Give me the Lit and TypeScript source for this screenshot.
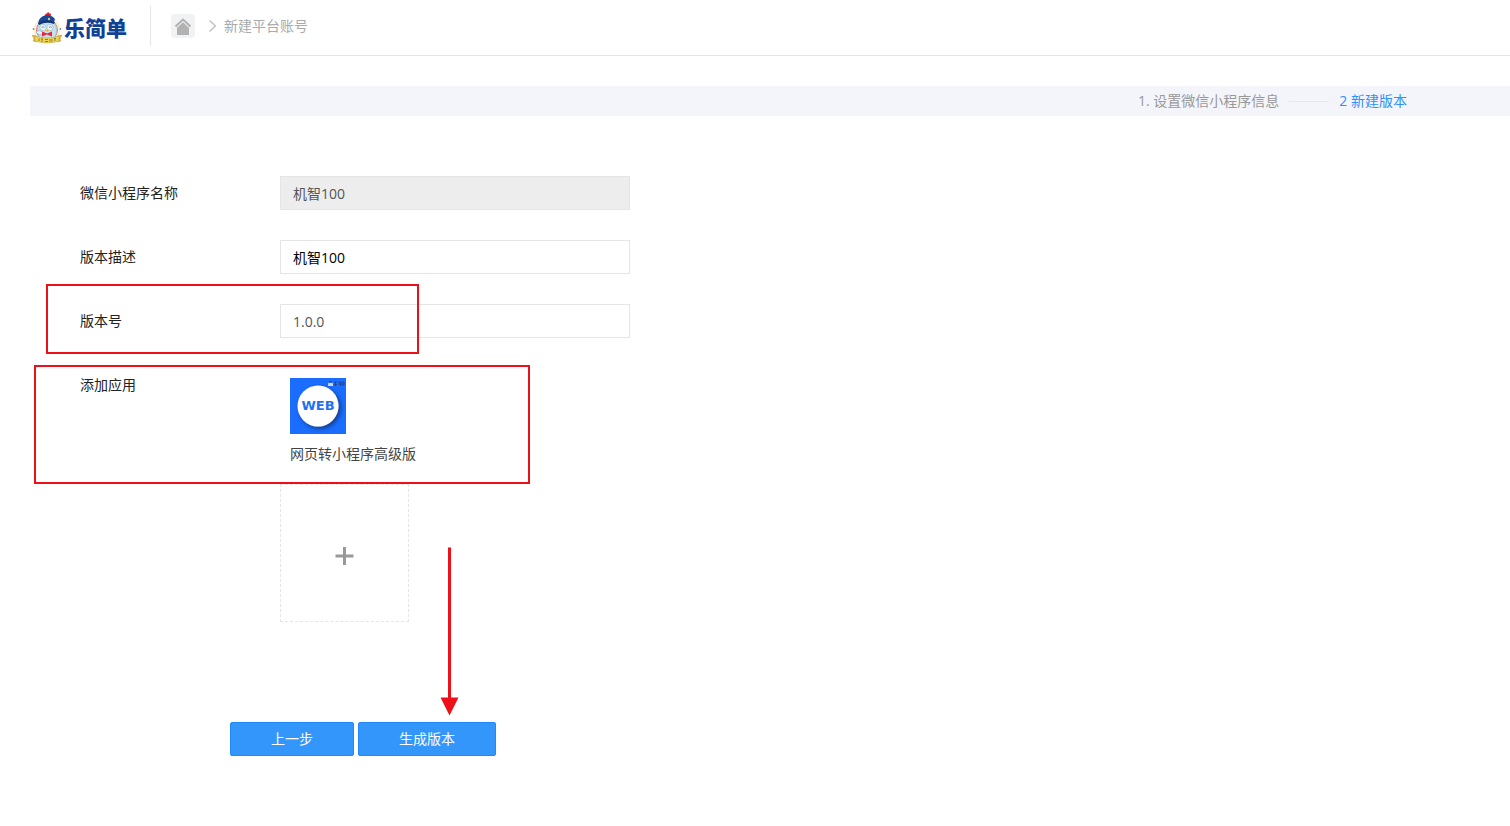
import { LitElement, html, css, svg } from "lit";
import { customElement, state } from "lit/decorators.js";

const mascot = svg`
  <circle cx="15" cy="18" r="12.500" fill="#fffdf4" stroke="#f8dd8c" stroke-width=".8"/>
  <circle cx="15" cy="18" r="10.500" fill="none" stroke="#e0707c" stroke-width="1"/>
  <circle cx="1.500" cy="17" r=".8" fill="#2b55a5"/><circle cx="28.500" cy="17" r=".8" fill="#2b55a5"/>
  <path d="M5.500 18c0-7 4-10 9.500-10s9.500 3 9.500 10-3 10-9.500 10-9.500-3-9.500-10z" fill="#c4e0ee" stroke="#8db0c6" stroke-width=".6"/>
  <ellipse cx="11" cy="15.500" rx="3.200" ry="3" fill="#eef7fb" stroke="#8aa6b8" stroke-width=".5"/>
  <ellipse cx="18" cy="15.500" rx="3.200" ry="3" fill="#eef7fb" stroke="#8aa6b8" stroke-width=".5"/>
  <path d="M9.500 15.500q1.500-1.500 3 0M17 15.500q1.500-1.500 3 0" fill="none" stroke="#4a6479" stroke-width=".7"/>
  <path d="M13 18h4l-2 2z" fill="#f3b62b"/>
  <path d="M4 20q4-3 7 1-3 4-7-1z" fill="#e9f4fa" stroke="#7797ad" stroke-width=".5"/>
  <path d="M10 19.500l5 2 5-2v5l-5-2-5 2z" fill="#e3293b"/>
  <path d="M13.500 4q-1-3 1.500-2.500Q16-1 17.500 1.500 20 1 18.500 4z" fill="#e2202e"/>
  <path d="M7 8q3-5 9-5 5 1 7 4l-1 3q-6-2-12 1l-4 1z" fill="#1b4798"/>
  <path d="M6 11q8-5 17-1l-1 2q-8-3-15 1z" fill="#12357c"/>
  <circle cx="17" cy="7" r="1.200" fill="#e8c958"/>
  <path d="M0 23l5 1v6l-4-1 1-2zM30 23l-5 1v6l4-1-1-2z" fill="#dcb93c" stroke="#b09332" stroke-width=".4"/>
  <path d="M3 24q12 4 24 0v5q-12 4-24 0z" fill="#f0d553" stroke="#b89c35" stroke-width=".5"/>
  <path d="M7 26.500v2.500M9 27h2m-1 0v3M13 27.500h3m-3 2h3M18 27v3m2-3v2.500M22 26.500h2m-1 0v2.500" stroke="#75682f" stroke-width=".8"/>`;

@customElement("app-root")
export class AppRoot extends LitElement {
  @state() private description = "机智100";
  @state() private version = "1.0.0";

  static styles = css`
    :host {
      display: block;
      position: relative;
      min-height: 100vh;
      background: #fff;
      color: #222;
      font: 14px/20px "Open Sans", "Noto Sans CJK SC", sans-serif;
    }
    * { box-sizing: border-box; }
    svg { display: block; flex: none; }
    .header {
      display: flex;
      height: 56px;
      padding: 6px 30px 9px;
      border-bottom: 1px solid #e5e5e5;
    }
    .brand {
      width: 121px;
      border-right: 1px solid #e5e5e5;
      padding-top: 4px;
    }
    .brand text {
      font: 900 21px "Noto Sans CJK SC", sans-serif;
      fill: #0f4196;
    }
    .crumbs {
      display: flex;
      align-items: center;
      height: 40px;
      padding-left: 20px;
      color: #aaa;
    }
    .home {
      display: grid;
      place-items: center;
      width: 24px;
      height: 24px;
      border-radius: 4px;
      background: #f0f2f4;
    }
    .chevron { margin: 0 7px 0 13px; }
    .steps {
      display: flex;
      justify-content: flex-end;
      align-items: center;
      height: 30px;
      margin: 30px 0 0 30px;
      padding-right: 103px;
      background: #f3f5fa;
      color: #999;
    }
    .rule {
      width: 40px;
      height: 1px;
      margin: 0 10px;
      background: #e5e8ec;
    }
    .current { color: #2f92fb; }
    .form { padding: 60px 80px; }
    .row {
      display: flex;
      align-items: flex-start;
      margin-bottom: 30px;
    }
    .label {
      width: 200px;
      line-height: 34px;
    }
    .field {
      width: 350px;
      height: 34px;
      padding: 0 12px;
      border: 1px solid #e5e5e5;
      border-radius: 0;
      outline: none;
      background: #fff;
      color: #000;
      font: inherit;
    }
    .field:disabled { background: #ededed; color: #555; }
    .muted { color: #555; }
    .app {
      display: grid;
      gap: 10px;
      padding: 10px 10px 20px;
      color: #444;
    }
    .app text {
      font: bold 13px "DejaVu Sans", sans-serif;
      fill: #236ff3;
    }
    .add {
      display: grid;
      place-items: center;
      width: 129px;
      height: 138px;
      padding: 6px 0 0;
      border: 1px dashed #e5e5e5;
      background: none;
      cursor: pointer;
    }
    .actions {
      display: flex;
      gap: 4px;
      margin-top: 100px;
      padding-left: 150px;
    }
    .button {
      height: 34px;
      padding: 0 40px;
      border: 1px solid #1f88fa;
      border-radius: 2px;
      background: #3396fb;
      color: #fff;
      font: inherit;
      cursor: pointer;
    }
    .mark {
      position: absolute;
      border: 2px solid #ed1019;
      pointer-events: none;
    }
    .mark-version { left: 46px; top: 284px; width: 373px; height: 70px; }
    .mark-app { left: 34px; top: 365px; width: 496px; height: 119px; }
    .arrow {
      position: absolute;
      left: 440px;
      top: 547px;
      pointer-events: none;
    }
  `;

  render() {
    return html`
      <header class="header">
        <div class="brand">
          <svg width="100" height="34" viewBox="0 0 100 34">
            <g transform="translate(2 2)">${mascot}</g>
            <text x="34" y="26">乐简单</text>
          </svg>
        </div>
        <nav class="crumbs">
          <a class="home" href="#" aria-label="首页">
            <svg width="16" height="18" viewBox="0 0 16 18">
              <path d="M.500 9.500L8 2.500l7.500 7" fill="none" stroke="#b2b2b2" stroke-width="2"/>
              <path d="M2 10.800L8 5.200l6 5.600V18H2z" fill="#b2b2b2"/>
            </svg>
          </a>
          <svg class="chevron" width="9" height="12" viewBox="0 0 9 12">
            <path d="M1.500.500L7.500 6l-6 5.500" fill="none" stroke="#bbb" stroke-width="1.200"/>
          </svg>
          <span>新建平台账号</span>
        </nav>
      </header>
      <div class="steps">
        <span>1. 设置微信小程序信息</span>
        <span class="rule"></span>
        <span class="current">2 新建版本</span>
      </div>
      <form class="form" @submit=${(e: Event) => e.preventDefault()}>
        <div class="row">
          <label class="label" for="name">微信小程序名称</label>
          <input class="field" id="name" value="机智100" disabled />
        </div>
        <div class="row">
          <label class="label" for="desc">版本描述</label>
          <input class="field" id="desc" .value=${this.description}
            @input=${(e: Event) => (this.description = (e.target as HTMLInputElement).value)} />
        </div>
        <div class="row">
          <label class="label" for="version">版本号</label>
          <input class="field muted" id="version" .value=${this.version}
            @input=${(e: Event) => (this.version = (e.target as HTMLInputElement).value)} />
        </div>
        <div class="row">
          <span class="label">添加应用</span>
          <div>
            <div class="app">
              <svg width="56" height="56" viewBox="0 0 56 56">
                <defs>
                  <filter id="shade" x="-20%" y="-20%" width="150%" height="150%">
                    <feDropShadow dx="2" dy="2" stdDeviation="2" flood-color="#0a2a66" flood-opacity=".8"/>
                  </filter>
                </defs>
                <rect width="56" height="56" fill="#1b6dff"/>
                <circle cx="28" cy="28" r="20.500" fill="#fff" filter="url(#shade)"/>
                <path d="M38 7q0-3 2.500-3T43 7v1h-5z" fill="#c5d7ee"/>
                <path d="M39 4h3" stroke="#24418e" stroke-width="1.500"/>
                <path d="M44 4h3m-3 2.500h3M45.500 4v4M48.500 4h2v4m-2-2h2M52 4h2v3h-2z" fill="none" stroke="#17469d" stroke-width="1"/>
                <text x="28" y="32" text-anchor="middle">WEB</text>
              </svg>
              <span>网页转小程序高级版</span>
            </div>
            <button class="add" type="button" aria-label="添加应用">
              <svg width="19" height="18" viewBox="0 0 19 18">
                <path d="M.500 9h18M9.500 0v18" stroke="#999" stroke-width="3"/>
              </svg>
            </button>
          </div>
        </div>
        <div class="actions">
          <button class="button" type="button">上一步</button>
          <button class="button" type="submit">生成版本</button>
        </div>
      </form>
      <div class="mark mark-version"></div>
      <div class="mark mark-app"></div>
      <svg class="arrow" width="19" height="169" viewBox="0 0 19 169">
        <path d="M8 .500h3V150.500h7.500L9.500 168.500.500 150.500H8z" fill="#ed1019"/>
      </svg>
    `;
  }
}
